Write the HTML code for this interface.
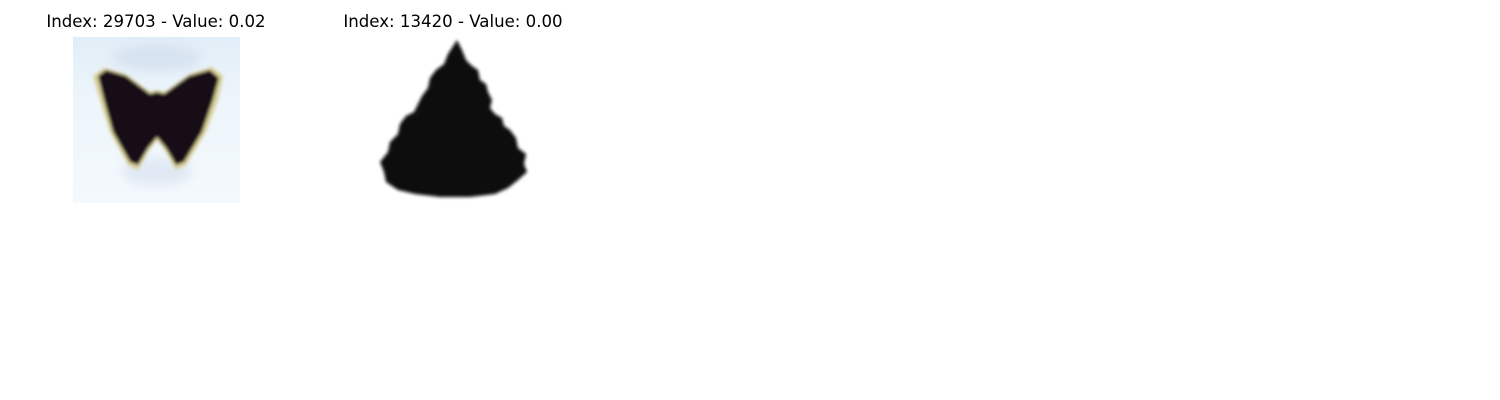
<!DOCTYPE html>
<html><head><style>
html,body{margin:0;padding:0;background:#fff;width:1500px;height:400px;overflow:hidden}
.t{position:absolute;top:12px;font-family:"DejaVu Sans","Liberation Sans",sans-serif;font-size:16.6px;color:#000;white-space:nowrap;transform:translateX(-50%)}
svg{position:absolute;left:0;top:0}
</style></head><body>
<div class="t" style="left:156px">Index: 29703 - Value: 0.02</div>
<div class="t" style="left:453px">Index: 13420 - Value: 0.00</div>
<svg width="1500" height="400">
<defs>
<filter id="b" x="-20%" y="-20%" width="140%" height="140%"><feGaussianBlur stdDeviation="1.6"/></filter>
<filter id="b2" x="-20%" y="-20%" width="140%" height="140%"><feGaussianBlur stdDeviation="5"/></filter>
<linearGradient id="bg" x1="0" y1="0" x2="0" y2="1">
<stop offset="0" stop-color="#e2edf7"/><stop offset="0.4" stop-color="#eef6fb"/><stop offset="1" stop-color="#f4f9fd"/></linearGradient>
</defs>
<rect x="73" y="37" width="167" height="166" fill="url(#bg)"/>
<g filter="url(#b2)"><ellipse cx="157" cy="58" rx="45" ry="14" fill="#d5e0ef" opacity="0.8"/><ellipse cx="157" cy="172" rx="35" ry="14" fill="#d8e2f0" opacity="0.7"/></g>
<g filter="url(#b)">
<polygon points="93,76 104,68 125,74 150,92 157,90 165,92 190,74 212,67 223,76 218,100 206,132 186,165 176,170 166,152 157,140 148,152 138,170 128,165 110,132 100,100" fill="#d8cf98"/>
<polygon points="98,76 106,70 126,76 150,94 157,92 164,94 189,76 210,70 219,78 213,100 202,132 184,162 176,165 166,148 157,137 148,148 138,165 130,162 113,132 104,100" fill="#140f12"/>
</g>
<g filter="url(#b)">
<polygon points="457,40 462,50 466,60 472,66 478,70 480,80 486,84 488,92 492,100 490,108 495,114 502,118 504,126 510,130 516,138 518,148 526,154 524,164 527,172 518,180 508,188 495,194 470,197 440,197 415,194 398,190 386,182 384,172 380,162 388,152 390,142 398,134 400,124 406,116 414,112 418,104 422,96 428,88 430,78 436,70 444,64 448,54" fill="#111"/>
</g>
</svg>
</body></html>
